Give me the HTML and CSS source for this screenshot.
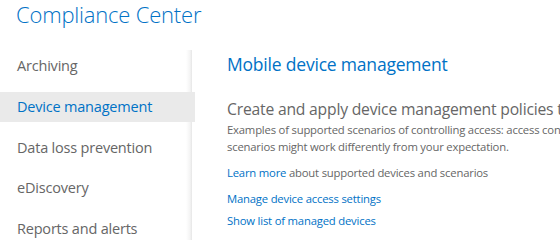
FILE: index.html
```html
<!DOCTYPE html>
<html lang="en">
<head>
    <meta charset="UTF-8">
    <title>Compliance Center</title>
    <link rel="stylesheet" href="styles.css">
</head>
<body>
<header class="top">
    <h1 class="brand">Compliance Center</h1>
</header>
<section class="wrap">
    <nav class="side">
        <a href="javascript:;">Archiving</a>
        <a href="javascript:;" class="active">Device management</a>
        <a href="javascript:;">Data loss prevention</a>
        <a href="javascript:;">eDiscovery</a>
        <a href="javascript:;">Reports and alerts</a>
    </nav>
    <div class="main">
        <h2 class="title">Mobile device management</h2>
        <p class="lead">Create and apply device management policies to help protect your organization's data</p>
        <p class="note">Examples of supported scenarios of controlling access: access control, device wipe and policy enforcement. Some of these<br>scenarios might work differently from your expectation.</p>
        <p class="more"><a href="javascript:;">Learn more</a> about supported devices and scenarios</p>
        <ul class="links">
            <li><a href="javascript:;">Manage device access settings</a></li>
            <li><a href="javascript:;">Show list of managed devices</a></li>
        </ul>
    </div>
</section>
</body>
</html>
```
FILE: styles.css
```css
html, body {
    margin: 0;
    padding: 0;
    height: 100%;
    overflow: hidden;
}
body {
    font-family: "Open Sans", "Noto Sans", sans-serif;
    color: #666;
    background: #fff;
}
a {
    color: #0072c6;
    text-decoration: none;
}
.top {
    height: 40px;
    padding: 0 0 0 16px;
}
.brand {
    margin: 0;
    font-size: 22px;
    font-weight: 300;
    line-height: 29px;
    color: #0072c6;
    letter-spacing: -0.2px;
}
.wrap {
    display: flex;
    padding-top: 10px;
}
.side {
    flex: none;
    display: flex;
    flex-direction: column;
    gap: 10.75px;
    width: 192px;
    height: 200px;
    padding-top: 1px;
    background: linear-gradient(to right, #fff 186px, #f4f4f4 190px, #e6e6e6 192px);
}
.side a {
    display: block;
    flex: none;
    height: 30px;
    line-height: 30px;
    padding-left: 17px;
    font-size: 14.5px;
    color: #666;
    letter-spacing: -0.2px;
}
.side .active {
    color: #0072c6;
    background: #eaeaea;
    margin-right: -3px;
}
.main {
    flex: 1;
    min-width: 0;
    padding-left: 35px;
    white-space: nowrap;
}
.title {
    margin: 0;
    font-size: 17.5px;
    font-weight: 400;
    line-height: 29px;
    color: #0072c6;
    letter-spacing: -0.2px;
}
.lead {
    margin: 19px 0 0;
    font-size: 15.7px;
    line-height: 22px;
    letter-spacing: -0.2px;
}
.note {
    margin: 1px 0 0;
    font-size: 11.3px;
    line-height: 17px;
    letter-spacing: -0.2px;
}
.more {
    margin: 9px 0 0;
    font-size: 11.3px;
    line-height: 17px;
    letter-spacing: -0.2px;
}
.links {
    list-style: none;
    margin: 7px 0 0;
    padding: 0;
    font-size: 11.3px;
    line-height: 21.5px;
    letter-spacing: -0.2px;
}
```
